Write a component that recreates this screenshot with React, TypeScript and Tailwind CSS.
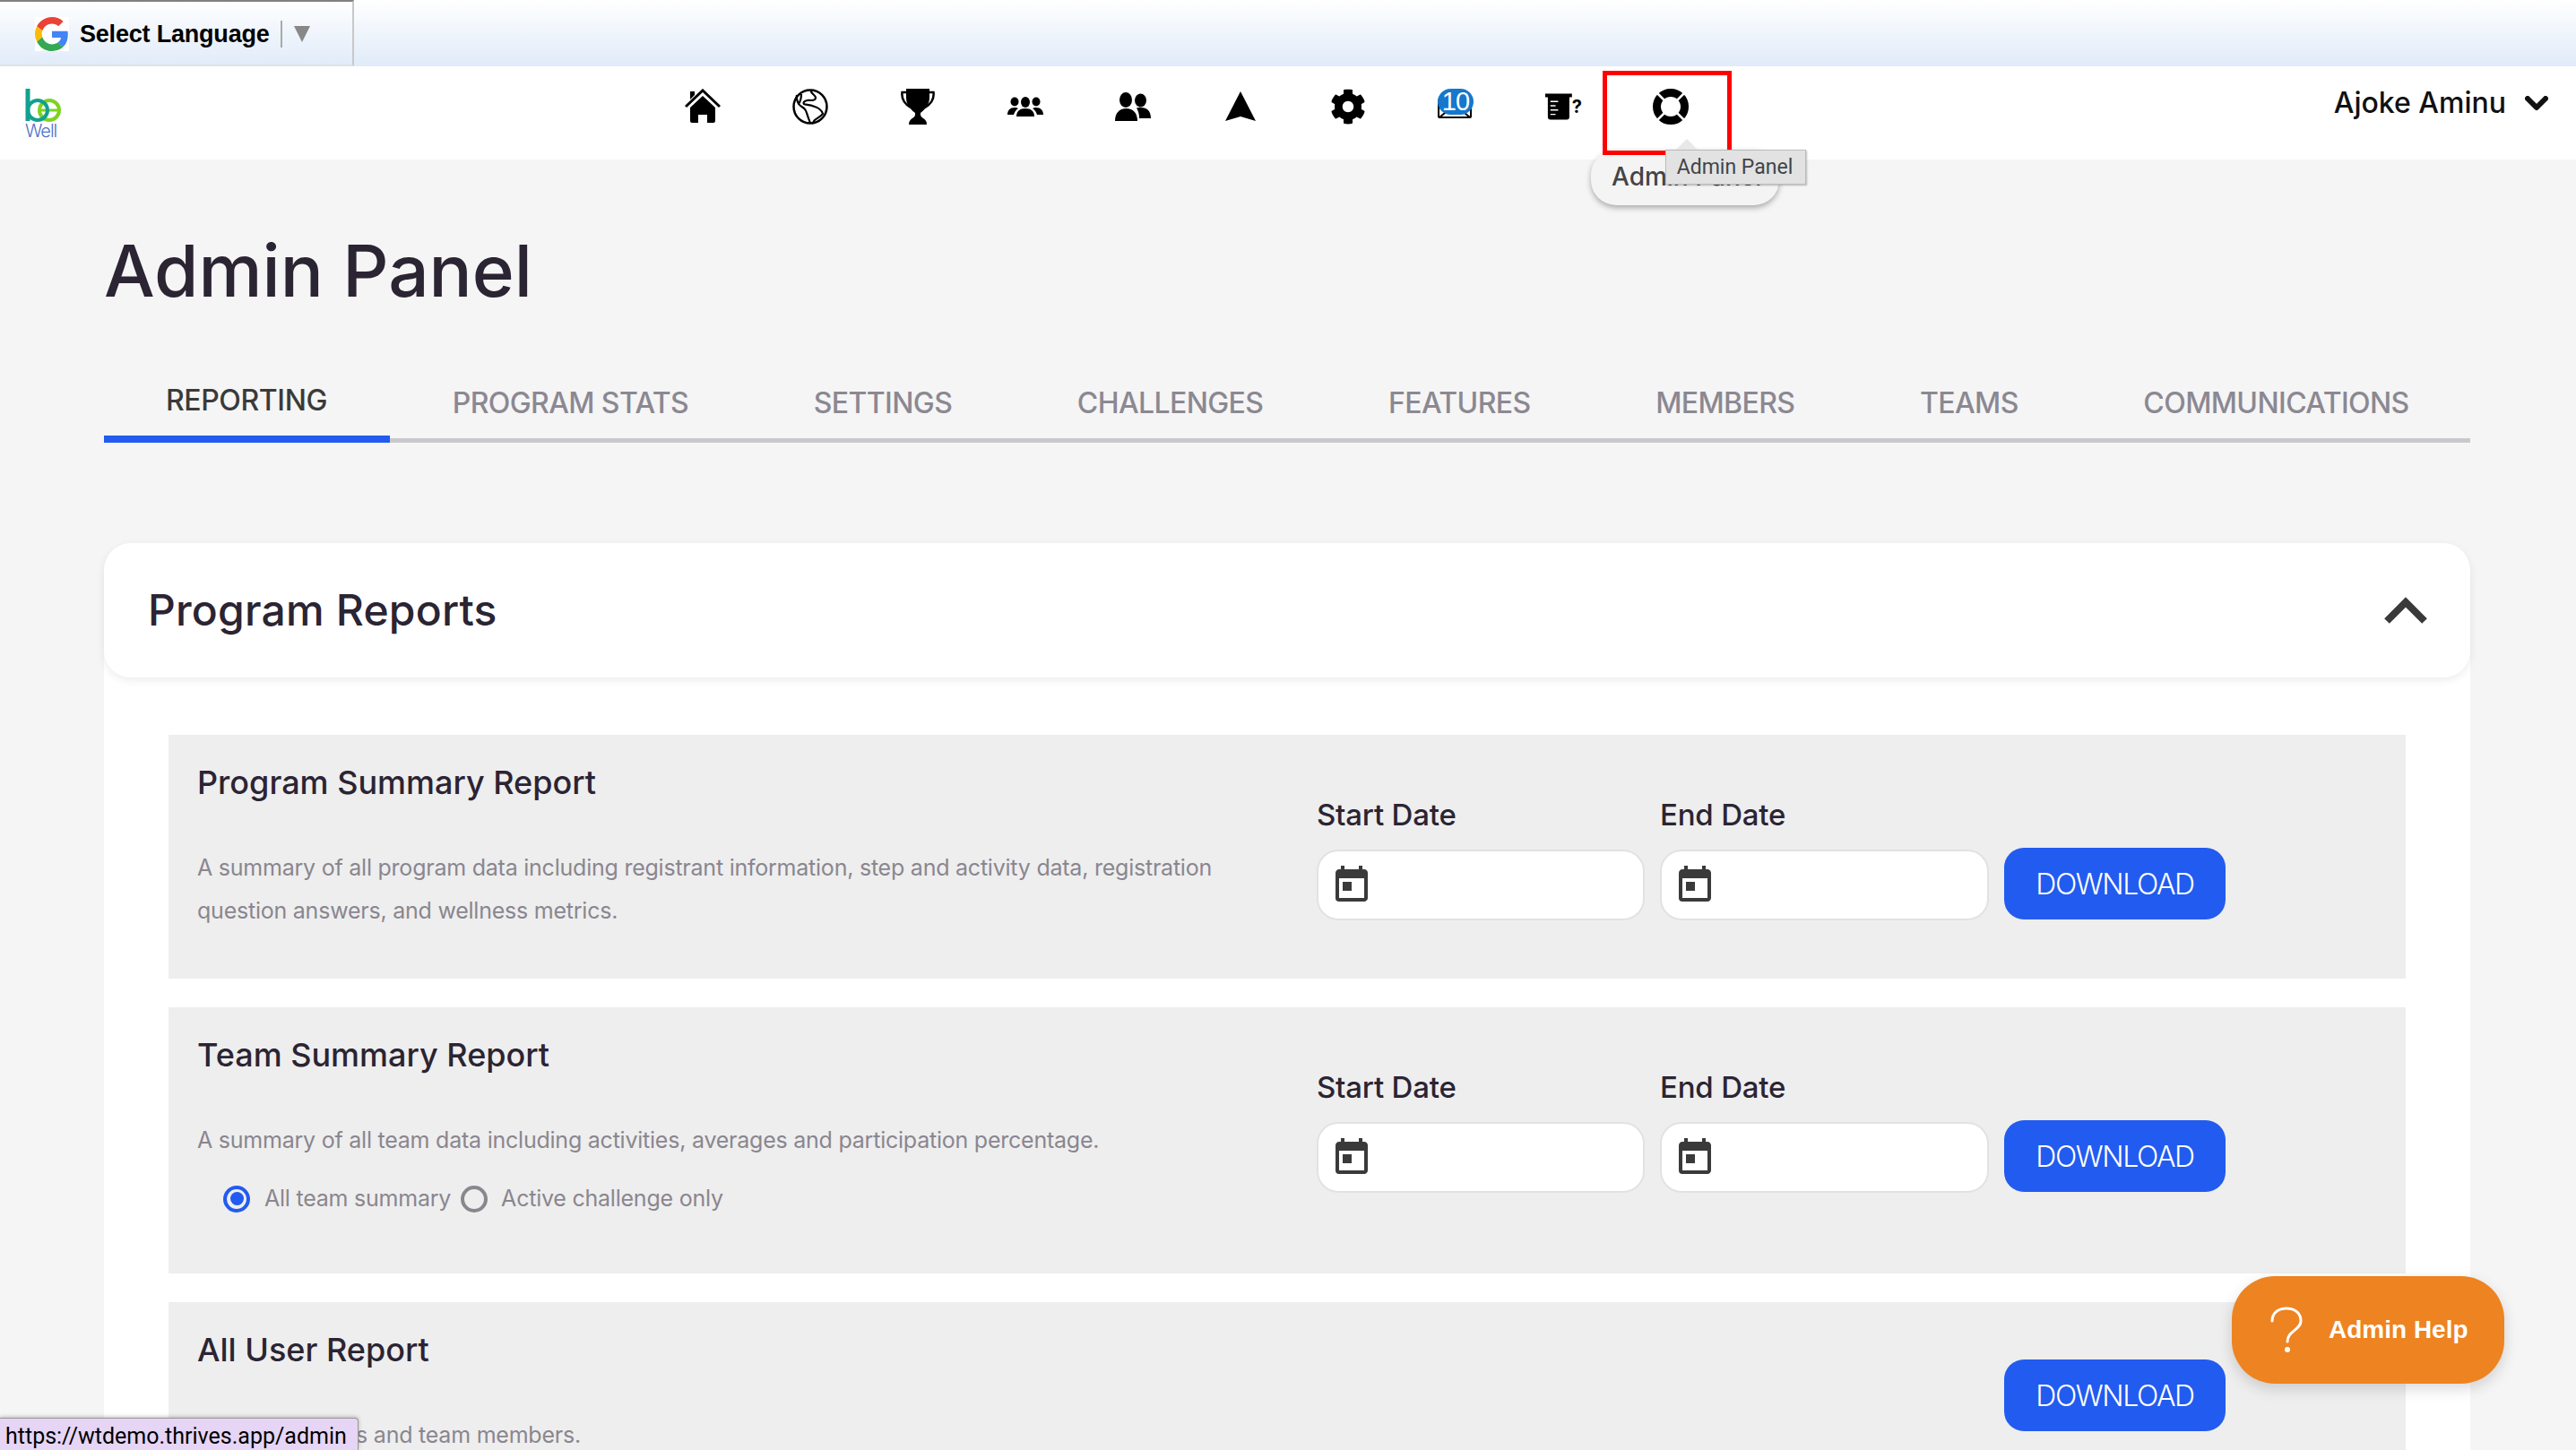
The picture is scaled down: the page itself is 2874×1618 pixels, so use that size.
import React from "react";
import { MdToday } from "react-icons/md";
import { FaCog } from "react-icons/fa";

const tabs = ["REPORTING", "PROGRAM STATS", "SETTINGS", "CHALLENGES", "FEATURES", "MEMBERS", "TEAMS", "COMMUNICATIONS"];

const DateField = ({ label, width }: { label: string; width: string }) => (
  <div className={width}>
    <div className="h-[32px] text-[33px] leading-[32px] font-medium tracking-[-0.2px] text-[#2b2433] whitespace-nowrap">{label}</div>
    <div className="mt-[23px] h-[79px] bg-white border-2 border-[#e2e2e2] rounded-[24px] flex items-center pl-[13px]">
      <MdToday className="w-[48px] h-[48px] text-[#3a3a3a]" />
    </div>
  </div>
);

const DownloadBtn = () => (
  <button className="w-[247px] h-[80px] pt-[2px] bg-[#225bef] text-white rounded-[22px] text-[32px] font-light tracking-[-1.4px]">DOWNLOAD</button>
);

const Dates = () => (
  <div className="flex items-end gap-[17px]">
    <DateField label="Start Date" width="w-[366px]" />
    <DateField label="End Date" width="w-[367px]" />
    <div className="pb-px"><DownloadBtn /></div>
  </div>
);

const Logo = () => (
  <div className="w-[40px] flex flex-col">
    <svg width="40" height="38" viewBox="0 0 40 38" fill="none">
      <circle cx="27" cy="24" r="11" stroke="#7ed321" strokeWidth="4" />
      <path d="M16 24h22" stroke="#7ed321" strokeWidth="3" />
      <circle cx="14" cy="24" r="11" stroke="#12a08f" strokeWidth="4" />
      <path d="M3 0v36" stroke="#12a08f" strokeWidth="5" />
    </svg>
    <div className="text-[20px] leading-[18px] font-light text-[#4f72c4] tracking-[-1px]">Well</div>
  </div>
);

const HomeIcon = () => (
  <svg width="40" height="40" viewBox="0 0 40 40">
    <path d="M1 20 20 2l19 18" fill="none" stroke="#000" strokeWidth="3" />
    <path d="M20 8l14 13v15a2 2 0 0 1-2 2h-7v-9H15v9H8a2 2 0 0 1-2-2V21z" fill="#000" />
    <path d="M6 3h5v4l-5 5z" fill="#000" />
  </svg>
);

const GlobeIcon = () => (
  <svg width="40" height="40" viewBox="0 0 40 40" fill="none" stroke="#000" strokeWidth="2.200" strokeLinejoin="round">
    <circle cx="20" cy="20" r="18.500" strokeWidth="2.500" />
    <path d="M21 2c-1 3 5 5 5 8s-3 3-5 3-5-1-7 1c-2 1-2 3 0 3.500 3 .5 7 1 11 2.500 3 1 8 4 9 8-2 3-7 5-9 7-1 1-2 3-3 4" />
    <path d="M5 7c-1 4 1 8 2 10 2 3 6 4 7 6 2 2 2 5 3 7 1 3 2 6 3 8" />
    <path d="M7 17c2-3 3-7 3-11" />
  </svg>
);

const TrophyIcon = () => (
  <svg width="40" height="40" viewBox="0 0 40 40">
    <path d="M10 4H2.500c-1 8 3 13 9.500 17M30 4h7.500c1 8-3 13-9.500 17" fill="none" stroke="#000" strokeWidth="2.500" />
    <path d="M7 0h26v10c0 8-5 13-10 17v2c0 2 2 3 3 4 2 1 4 3 4 7H10c0-4 2-6 4-7 1-1 3-2 3-4v-2C12 23 7 18 7 10z" fill="#000" />
  </svg>
);

const GroupIcon = () => (
  <svg width="40" height="22" viewBox="0 0 40 22">
    <ellipse cx="8" cy="5.500" rx="4.500" ry="5" />
    <ellipse cx="20" cy="6" rx="5" ry="6" />
    <ellipse cx="32" cy="5.500" rx="4.500" ry="5" />
    <path d="M10 22c0-6 4-9 10-9s10 3 10 9z" />
    <path d="M0 20c0-5 3-8 8-8 2 0 3 .5 4 1-3 2-4 4-5 7z" />
    <path d="M40 20c0-5-3-8-8-8-2 0-3 .5-4 1 3 2 4 4 5 7z" />
  </svg>
);

const PairIcon = () => (
  <svg width="40" height="32" viewBox="0 0 40 32">
    <ellipse cx="12" cy="8.500" rx="7" ry="8.500" />
    <ellipse cx="28.500" cy="9" rx="6.500" ry="7.500" />
    <path d="M0 32c0-9 5-14 12.500-14S25 23 25 32z" />
    <path d="M24 17.500c2-.5 3-.5 5-.5 7 0 11 4 11 12H27c0-5-1-8-3-11.500z" />
  </svg>
);

const MailBadge = () => (
  <div className="relative w-[40px] h-[40px]">
    <svg className="absolute left-0 top-0" width="40" height="34" viewBox="0 0 40 34" fill="none" stroke="#000" strokeWidth="2">
      <rect x="1" y="12" width="36" height="20" rx="1" />
      <path d="M2 32l12-10M36 32L24 22" />
    </svg>
    <div className="absolute left-0 top-0 w-[40px] h-[29px] rounded-full bg-[#1677cc] text-white text-[29px] leading-[29px] tracking-[-1px] text-center font-['Liberation_Sans',sans-serif]">10</div>
  </div>
);

const BeakerIcon = () => (
  <div className="flex items-start w-[41px] h-[40px] pt-[5px]">
    <svg width="31" height="30" viewBox="0 0 31 30">
      <path d="M0 0h31v4h-3v23a3 3 0 0 1-3 3H6a3 3 0 0 1-3-3V4H0z" fill="#000" />
      <path d="M6 9h9M6 14h6M6 19h9M6 24h6" stroke="#fff" strokeWidth="1.500" />
    </svg>
    <span className="mt-[5px] text-[20px] leading-[20px] font-bold text-black">?</span>
  </div>
);

const LifebuoyIcon = () => (
  <svg width="40" height="40" viewBox="0 0 40 40">
    <circle cx="20" cy="20" r="15.500" fill="none" stroke="#000" strokeWidth="9" />
    <path d="M5 5l9 9M35 5l-9 9M5 35l9-9M35 35l-9-9" stroke="#fff" strokeWidth="2.500" />
  </svg>
);

const rowClass = "bg-[#eeeeee] pl-[32px] pr-[201px] flex justify-between";
const rowTitle = "text-[36px] font-medium text-[#2b2433] leading-[46px]";
const rowText = "mt-[48px] text-[25px] leading-[48px] tracking-[-0.23px] text-[#8a868f]";

export default function App() {
  return (
    <div className="relative w-[2874px] h-[1618px] overflow-hidden bg-[#f5f5f5] font-['Inter',sans-serif]">
      {/* google translate strip */}
      <div className="h-[74px] bg-gradient-to-b from-white to-[#e0ebf9]">
        <div className="w-[395px] h-[74px] border-t-2 border-r-2 border-b-2 border-t-[#808080] border-r-[#c8c8c8] border-b-[#e2e2e2] flex items-center pl-[39px] pt-[2px] font-['Liberation_Sans',sans-serif]">
          <svg width="38" height="38" viewBox="0 0 48 48">
            <rect width="48" height="48" fill="#fff" />
            <path fill="#EA4335" d="M24 9.500c3.500 0 6.700 1.300 9.100 3.500l6.800-6.800C35.900 2.400 30.400 0 24 0 14.600 0 6.500 5.400 2.600 13.200l7.900 6.200C12.400 13.700 17.700 9.500 24 9.500z" />
            <path fill="#4285F4" d="M46.500 24.500c0-1.600-.2-3.100-.4-4.500H24v9h12.700c-.6 2.900-2.200 5.400-4.700 7.100l7.700 6c4.500-4.200 6.800-10.300 6.800-17.600z" />
            <path fill="#FBBC05" d="M10.500 28.600c-.5-1.400-.8-3-.8-4.600s.3-3.200.8-4.600l-7.900-6.200C.9 16.500 0 20.100 0 24s.9 7.500 2.600 10.800l7.900-6.200z" />
            <path fill="#34A853" d="M24 48c6.500 0 11.900-2.100 15.900-5.900l-7.700-6c-2.200 1.400-4.900 2.300-8.100 2.300-6.300 0-11.600-4.200-13.500-10l-7.900 6.200C6.500 42.600 14.600 48 24 48z" />
          </svg>
          <span className="ml-[12px] text-[27px] tracking-[-0.2px] font-bold text-black">Select Language</span>
          <span className="ml-[12px] w-[2px] h-[30px] bg-[#aaa]" />
          <svg className="ml-[13px]" width="18" height="18" viewBox="0 0 18 18"><path d="M0 0h18L9 18z" fill="#888" /></svg>
        </div>
      </div>

      {/* nav */}
      <div className="h-[104px] bg-white flex items-start pl-[28px] pt-[25px]">
        <Logo />
        <div className="ml-[696px] flex gap-[80px] h-[40px] items-center">
          <HomeIcon />
          <GlobeIcon />
          <TrophyIcon />
          <GroupIcon />
          <PairIcon />
          <svg width="40" height="40" viewBox="0 0 40 40"><path d="M20 3l17 33-17-5-17 5z" fill="#000" /></svg>
          <FaCog className="w-[40px] h-[40px] text-black" />
          <MailBadge />
          <div className="w-[40px]"><BeakerIcon /></div>
          <LifebuoyIcon />
        </div>
        <div className="ml-auto mr-[31px] flex items-center gap-[21px] h-[32px]">
          <span className="text-[32px] font-medium text-[#111]">Ajoke Aminu</span>
          <svg width="26" height="17" viewBox="0 0 26 17" fill="none" stroke="#111" strokeWidth="6" strokeLinecap="round" strokeLinejoin="round"><path d="M3 3l10 10L23 3" /></svg>
        </div>
      </div>

      {/* page */}
      <div className="pl-[116px] pr-[118px]">
        <h1 className="mt-[86px] text-[80px] leading-[76px] font-medium text-[#2b2433]">Admin Panel</h1>

        <div className="mt-[74px] flex h-[80px] border-b-[5px] border-[#c9c9cd]">
          {tabs.map((t, i) => (
            <div
              key={t}
              className={
                i === 0
                  ? "shrink-0 w-[319px] pl-[69px] h-[80px] pb-[7px] flex items-center whitespace-nowrap text-[32px] tracking-[-0.4px] font-medium text-[#3a3a3a] border-b-[8px] border-[#225bef]"
                  : "shrink-0 px-[69.800px] h-[80px] pb-[9px] flex items-center whitespace-nowrap text-[32px] tracking-[-0.6px] font-medium text-[#8b8892]"
              }
            >
              {t}
            </div>
          ))}
        </div>

        <div className="mt-[112px] bg-white rounded-[30px]">
          <div className="h-[150px] rounded-[30px] shadow-[0_3px_10px_rgba(0,0,0,0.08)] flex items-center justify-between pl-[49px] pr-[48px]">
            <span className="text-[48px] tracking-[0.2px] font-medium text-[#2b2433]">Program Reports</span>
            <svg width="48" height="30" viewBox="0 0 48 30" fill="none" stroke="#3a3a3a" strokeWidth="8"><path d="M3 27L24 6l21 21" /></svg>
          </div>

          <div className="pt-[64px] px-[72px] flex flex-col gap-[32px]">
            <div className={`h-[272px] ${rowClass}`}>
              <div className="w-[1150px] pt-[30px]">
                <div className={rowTitle}>Program Summary Report</div>
                <p className={rowText}>
                  A summary of all program data including registrant information, step and activity data, registration question answers, and wellness metrics.
                </p>
              </div>
              <div className="pt-[73px]"><Dates /></div>
            </div>

            <div className={`h-[297px] ${rowClass}`}>
              <div className="w-[1150px] pt-[30px]">
                <div className={rowTitle}>Team Summary Report</div>
                <p className={rowText}>
                  A summary of all team data including activities, averages and participation percentage.
                </p>
                <div className="mt-[23px] ml-[29px] flex items-center text-[25px] tracking-[-0.23px] text-[#8a868f]">
                  <span className="w-[30px] h-[30px] rounded-full border-[4px] border-[#225bef] flex items-center justify-center">
                    <span className="w-[15px] h-[15px] rounded-full bg-[#225bef]" />
                  </span>
                  <span className="ml-[16px]">All team summary</span>
                  <span className="ml-[11px] w-[30px] h-[30px] rounded-full border-[4px] border-[#8a868f]" />
                  <span className="ml-[15px]">Active challenge only</span>
                </div>
              </div>
              <div className="pt-[73px]"><Dates /></div>
            </div>

            <div className={`h-[240px] ${rowClass}`}>
              <div className="w-[1150px] pt-[30px]">
                <div className={rowTitle}>All User Report</div>
                <p className={rowText}>A list of all users and team members.</p>
              </div>
              <div className="pt-[64px]"><DownloadBtn /></div>
            </div>
          </div>
        </div>
      </div>

      {/* hover label + native tooltip over the nav */}
      <div className="absolute left-[1775px] top-[167px] w-[210px] h-[62px] rounded-[28px] bg-[#f4f4f4] shadow-[0_3px_6px_rgba(0,0,0,0.3)] pl-[23px] text-[28px] leading-[60px] font-medium text-[#444]">Admin Panel</div>
      <div className="absolute left-[1788px] top-[79px] w-[144px] h-[94px] border-[5px] border-[#ff0000]" />
      <div className="absolute left-[1870px] top-[155px] w-0 h-0 border-x-[12px] border-x-transparent border-b-[12px] border-b-[#e8e8e8]" />
      <div className="absolute left-[1858px] top-[167px] w-[157px] h-[39px] bg-[#e2e2e2] border border-[#bbb] shadow-[1px_1px_2px_rgba(0,0,0,0.25)] text-center pr-[2px] text-[23px] leading-[37px] text-[#444] font-['Roboto',sans-serif]">Admin Panel</div>

      {/* help button */}
      <div className="absolute left-[2490px] top-[1424px] w-[304px] h-[120px] rounded-[48px] bg-[#ee8321] shadow-[0_6px_16px_rgba(0,0,0,0.15)] flex items-center pl-[42px]">
        <svg width="38" height="52" viewBox="0 0 38 52" fill="none" stroke="#fff" strokeWidth="3" strokeLinecap="round">
          <path d="M3 16C3 7 10 2 19 2s16 5 16 14c0 10-15 11-15 23" />
          <circle cx="20" cy="48" r="1.500" fill="#fff" />
        </svg>
        <span className="ml-[28px] text-[28px] font-bold text-white font-['Liberation_Sans',sans-serif]">Admin Help</span>
      </div>

      {/* status bar link */}
      <div className="absolute left-0 top-[1582px] w-[400px] h-[36px] bg-[#e6d5f5] border-t border-r border-[#999] rounded-tr-[4px] shadow-[0_-1px_4px_rgba(0,0,0,0.25)] pl-[6px] text-[25px] leading-[40px] text-black font-['Roboto',sans-serif]">https://wtdemo.thrives.app/admin</div>
    </div>
  );
}
